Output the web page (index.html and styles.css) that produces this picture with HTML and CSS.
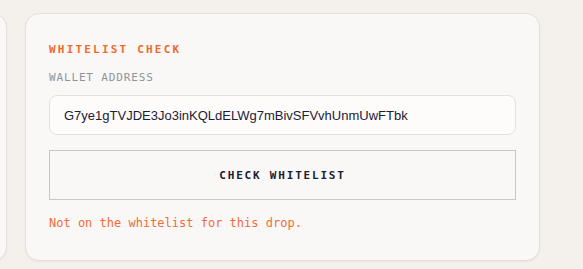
FILE: index.html
```html
<!DOCTYPE html>
<html lang="en">
<head>
<meta charset="utf-8">
<title>Whitelist Check</title>
<link rel="stylesheet" href="styles.css">
</head>
<body>
<div class="row">
  <section class="card card-prev"></section>
  <section class="card card-check">
    <h2 class="eyebrow">WHITELIST CHECK</h2>
    <label class="field-label" for="wallet">WALLET ADDRESS</label>
    <input class="field-input" id="wallet" type="text" value="G7ye1gTVJDE3Jo3inKQLdELWg7mBivSFVvhUnmUwFTbk">
    <button class="btn-check" type="button">CHECK WHITELIST</button>
    <p class="status-error">Not on the whitelist for this drop.</p>
  </section>
</div>
</body>
</html>
```
FILE: styles.css
```css
* { box-sizing: border-box; }
html, body { margin: 0; padding: 0; }
body {
  background: #f4f0ec;
  width: 583px;
  height: 269px;
  overflow: hidden;
  font-family: "DejaVu Sans Mono", monospace;
}
.row {
  display: flex;
  gap: 18px;
  padding-top: 13px;
  margin-left: -293px;
}
.card {
  background: #f9f8f6;
  border: 1px solid #e4e0db;
  border-radius: 14px;
  box-shadow: 0 1px 2px rgba(60, 40, 20, 0.05);
  height: 248px;
}
.card-prev { width: 300px; flex: none; }
.card-check {
  width: 515px;
  flex: none;
  padding: 28px 23px 0 23px;
  display: flex;
  flex-direction: column;
}
.eyebrow {
  margin: 0;
  font-size: 11px;
  line-height: 16px;
  font-weight: bold;
  letter-spacing: 2.2px;
  color: #f0692f;
}
.field-label {
  display: block;
  margin-top: 12px;
  font-size: 11px;
  line-height: 16px;
  letter-spacing: 0.85px;
  color: #8c949e;
}
.field-input {
  margin-top: 9px;
  height: 40px;
  width: 100%;
  border: 1px solid #e4e1dd;
  border-radius: 8px;
  background: #fdfcfb;
  padding: 0 14px;
  font-family: "Liberation Sans", Arial, sans-serif;
  font-size: 13px;
  color: #1b2036;
  outline: none;
}
.btn-check {
  margin-top: 15px;
  height: 50px;
  width: 100%;
  border: 1px solid #c9c7c4;
  border-radius: 0;
  background: #f9f8f6;
  font-family: "DejaVu Sans Mono", monospace;
  font-size: 11px;
  font-weight: bold;
  letter-spacing: 1.8px;
  color: #1c2030;
  padding: 0;
}
.status-error {
  margin: 15px 0 0 0;
  font-size: 12px;
  line-height: 16px;
  color: #f26b3a;
}
```
